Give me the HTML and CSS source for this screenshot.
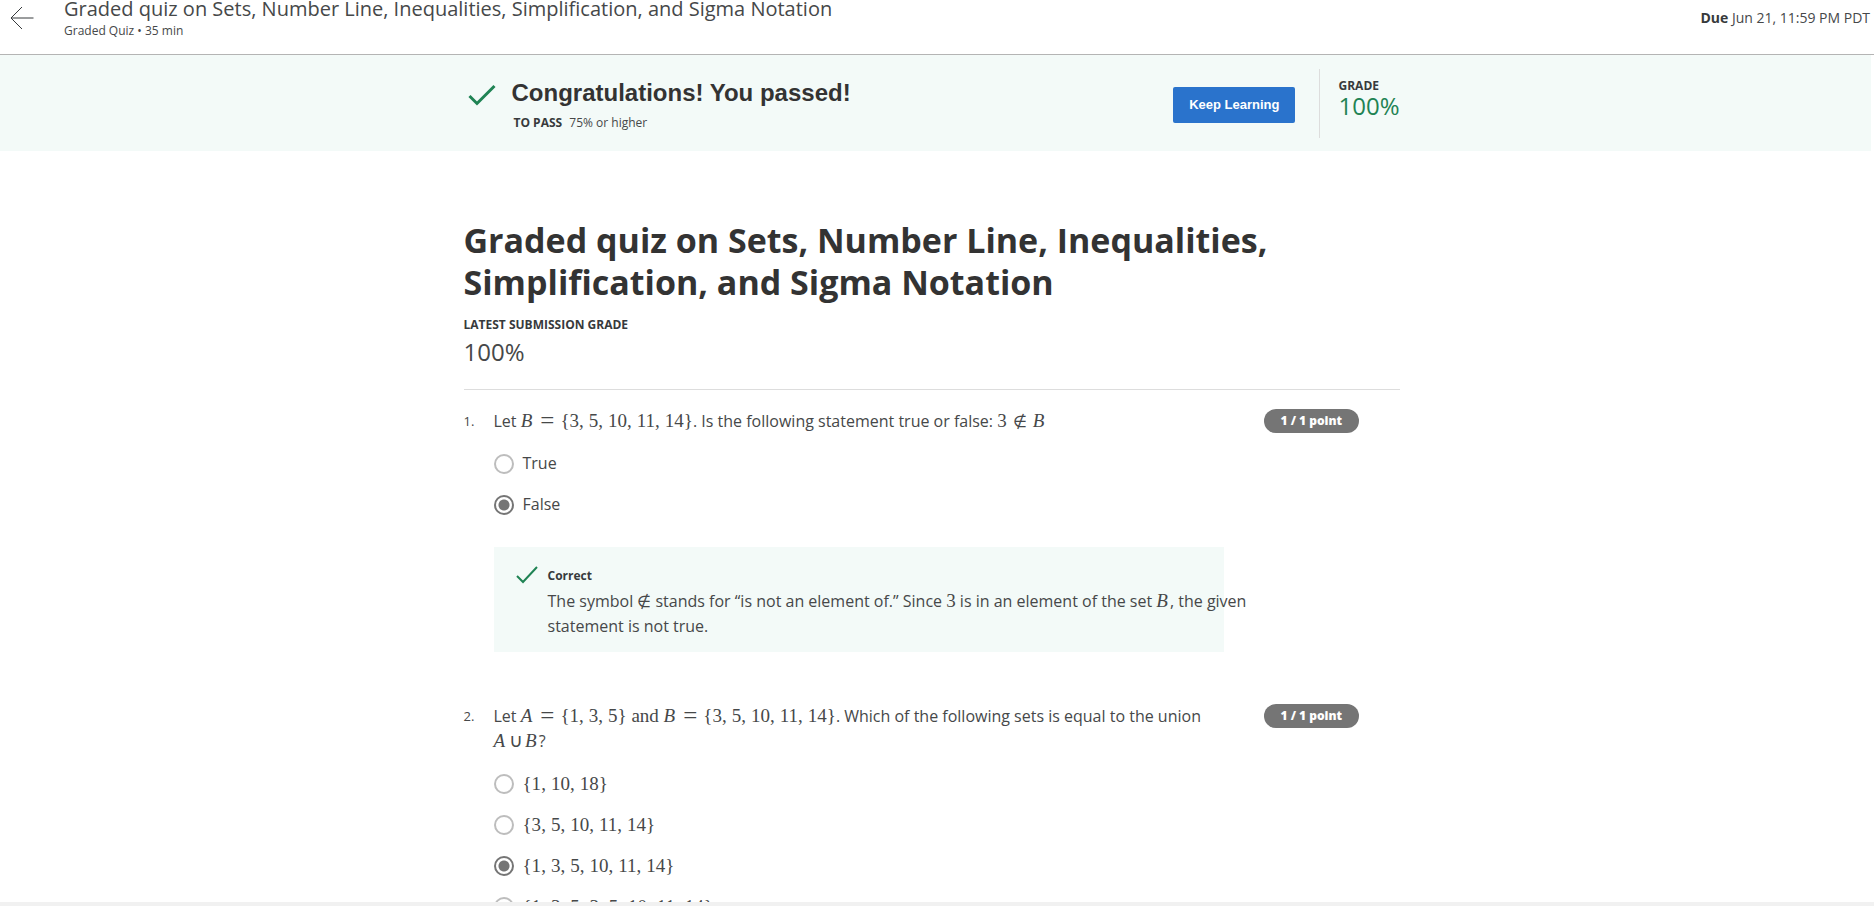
FILE: index.html
```html
<!DOCTYPE html>
<html lang="en">
<head>
<meta charset="utf-8">
<title>Graded quiz on Sets, Number Line, Inequalities, Simplification, and Sigma Notation</title>
<link rel="stylesheet" href="styles.css">
</head>
<body>
<header class="topbar">
  <button class="back" type="button" aria-label="Back">
    <svg width="24" height="24" viewBox="0 0 24 24" fill="none" stroke="currentColor"><path d="M23.500 12H1M12 1 1 12 12 23"/></svg>
  </button>
  <div class="heading">
    <div class="heading-title">Graded quiz on Sets, Number Line, Inequalities, Simplification, and Sigma Notation</div>
    <div class="heading-sub">Graded Quiz • 35 min</div>
  </div>
  <div class="due"><b>Due</b> Jun 21, 11:59 PM PDT</div>
</header>

<div class="scroller">
  <section class="banner">
    <div class="container banner-row">
      <svg class="banner-check" width="28" height="22" viewBox="0 0 28 22" fill="none" stroke="currentColor" stroke-width="3"><path d="M1.500 12 9 19.500 26.500 2"/></svg>
      <div class="banner-text">
        <h2 class="congrats">Congratulations! You passed!</h2>
        <p class="to-pass"><b>TO PASS</b> <span>75% or higher</span></p>
      </div>
      <button class="keep" type="button">Keep Learning</button>
      <div class="grade">
        <div class="label">GRADE</div>
        <div class="grade-value">100%</div>
      </div>
    </div>
  </section>

  <main class="page">
    <div class="container">
      <h1 class="title">Graded quiz on Sets, Number Line, Inequalities, Simplification, and Sigma Notation</h1>
      <div class="label">LATEST SUBMISSION GRADE</div>
      <div class="score">100%</div>

      <section class="question">
        <div class="num">1.</div>
        <div class="body">
          <p class="prompt" id="q1">Let <span class="math"><i>B</i><span class="eq">=</span>{3<s>,</s>5<s>,</s>10<s>,</s>11<s>,</s>14}</span>. Is the following statement true or false: <span class="math">3<span class="rel">∉</span><i>B</i></span></p>
          <div class="options" role="radiogroup" aria-labelledby="q1">
            <label class="option"><input type="radio" name="q1"><span>True</span></label>
            <label class="option"><input type="radio" name="q1" checked><span>False</span></label>
          </div>
          <div class="feedback">
            <svg class="feedback-check" width="22" height="18" viewBox="0 0 22 18" fill="none" stroke="currentColor" stroke-width="2"><path d="M1 10 7 16 21 1"/></svg>
            <div class="feedback-text">
              <div class="correct">Correct</div>
              <p class="explain">The symbol <span class="math"><span class="sym">∉</span></span> stands for “is not an element of.” Since <span class="math">3</span> is in an element of the set <span class="math"><i>B</i></span>, the given statement is not true.</p>
            </div>
          </div>
        </div>
        <div class="points">1 / 1 point</div>
      </section>

      <section class="question">
        <div class="num">2.</div>
        <div class="body">
          <p class="prompt" id="q2">Let <span class="math"><i>A</i><span class="eq">=</span>{1<s>,</s>3<s>,</s>5} and <i>B</i><span class="eq">=</span>{3<s>,</s>5<s>,</s>10<s>,</s>11<s>,</s>14}</span>. Which of the following sets is equal to the union <span class="math"><i>A</i><span class="bin">∪</span><i>B</i></span>?</p>
          <div class="options" role="radiogroup" aria-labelledby="q2">
            <label class="option"><input type="radio" name="q2"><span class="math">{1<s>,</s>10<s>,</s>18}</span></label>
            <label class="option"><input type="radio" name="q2"><span class="math">{3<s>,</s>5<s>,</s>10<s>,</s>11<s>,</s>14}</span></label>
            <label class="option"><input type="radio" name="q2" checked><span class="math">{1<s>,</s>3<s>,</s>5<s>,</s>10<s>,</s>11<s>,</s>14}</span></label>
            <label class="option"><input type="radio" name="q2"><span class="math">{1<s>,</s>3<s>,</s>5<s>,</s>3<s>,</s>5<s>,</s>10<s>,</s>11<s>,</s>14}</span></label>
          </div>
        </div>
        <div class="points">1 / 1 point</div>
      </section>
    </div>
  </main>
</div>
<footer class="bottom-edge"></footer>
</body>
</html>
```
FILE: styles.css
```css
* { box-sizing: border-box; }

body {
  margin: 0;
  height: 100vh;
  display: flex;
  flex-direction: column;
  overflow: hidden;
  background: #fff;
  color: #464849;
  font-family: "Open Sans", sans-serif;
  font-size: 16px;
  line-height: 25px;
}

h1, h2, p { margin: 0; }
b { color: #373a3c; }

.topbar {
  flex: none;
  display: flex;
  align-items: flex-start;
  height: 55px;
  padding: 0 4px 0 10px;
  border-bottom: 1px solid #b4b4b4;
}

.back {
  margin: 6px 30px 0 0;
  padding: 0;
  border: 0;
  background: none;
  color: #373a3c;
  line-height: 0;
}

.heading { flex: 1; }
.heading-title { font-size: 20px; line-height: 18px; }
.heading-sub { margin-top: 4px; font-size: 12px; line-height: 18px; }
.due { margin-top: 6px; font-size: 14px; line-height: 24px; }

.scroller {
  flex: 1;
  min-height: 0;
  overflow-y: auto;
  scrollbar-width: none;
}

.container {
  max-width: 936px;
  margin: 0 auto;
}

.banner {
  margin-right: 3px;
  padding: 14px 8px 13px 0;
  background: #f3faf8;
}

.banner-row { display: flex; align-items: center; height: 69px; }
.banner-check { margin: 0 16px 18px 4px; color: #1f8354; }
.banner-text { flex: 1; margin-top: 3px; }
.congrats {
  font-family: "Liberation Sans", Arial, sans-serif;
  font-size: 24px;
  line-height: 30px;
  color: #333;
}
.to-pass { margin: 6px 0 0 2px; font-size: 12px; line-height: 18px; }
.to-pass span { margin-left: 4px; }

.keep {
  height: 36px;
  margin-top: 2px;
  padding: 0 16px 1px;
  border: 0;
  border-radius: 2px;
  background: #2a73cc;
  color: #fff;
  font-family: "Liberation Sans", Arial, sans-serif;
  font-size: 13px;
  font-weight: 700;
}

.grade {
  height: 69px;
  margin-left: 24px;
  padding: 8px 0 0 18px;
  border-left: 1px solid #ddd;
}
.label { font-size: 12px; font-weight: 700; line-height: 18px; color: #373a3c; }
.grade-value { font-size: 24px; line-height: 22px; color: #1f8354; }

.page { padding: 68px 11px 0 0; }
.title { font-size: 34px; line-height: 42px; color: #333; }
.title + .label { margin-top: 13px; }
.score { margin-top: 4px; padding-bottom: 24px; font-size: 24px; line-height: 27px; border-bottom: 1px solid #ddd; }

.question { display: flex; align-items: flex-start; padding-top: 19px; }
.question + .question { padding-top: 52px; }
.num { flex: none; width: 30px; font-size: 13px; line-height: 25px; }
.body { flex: none; width: 730px; }
.points {
  margin-left: 40px;
  padding: 0 17px;
  border-radius: 12px;
  background: #757575;
  color: #fff;
  font-size: 12px;
  font-weight: 800;
  line-height: 24px;
}

.options { padding-top: 9px; }
.option { display: flex; align-items: center; gap: 9px; height: 41px; }
.option input {
  appearance: none;
  width: 20px;
  height: 20px;
  margin: 0;
  border: 2px solid #bdbdbd;
  border-radius: 50%;
  background: #fff;
}
.option input:checked {
  border-color: #757575;
  background: radial-gradient(circle, #757575 5px, #fff 6px);
}

.feedback { display: flex; margin-top: 22px; padding: 16px 0 13px 22px; background: #f3faf8; }
.feedback-check { flex: none; margin: 3px 10px 0 0; color: #1f8354; }
.feedback-text { flex: none; width: 710px; }
.correct { font-size: 12px; font-weight: 700; line-height: 25px; color: #373a3c; }
.explain { margin-top: 1px; }

.math {
  font-family: "Liberation Serif", "DejaVu Serif", serif;
  font-size: 19px;
  line-height: 24px;
  white-space: nowrap;
}
.math s { margin-right: 5px; text-decoration: none; }
.math i { margin-right: 2px; }
.rel, .bin, .sym { font-family: "DejaVu Sans", sans-serif; font-size: 16px; font-weight: 200; line-height: 1; }
.rel { margin: 0 6px; }
.bin { margin: 0 2px; font-size: 19px; }
.eq { margin: 0 6px; font-size: 25px; line-height: 0; vertical-align: -2px; }

.bottom-edge { flex: none; height: 4px; background: #f1f1f1; }
```
